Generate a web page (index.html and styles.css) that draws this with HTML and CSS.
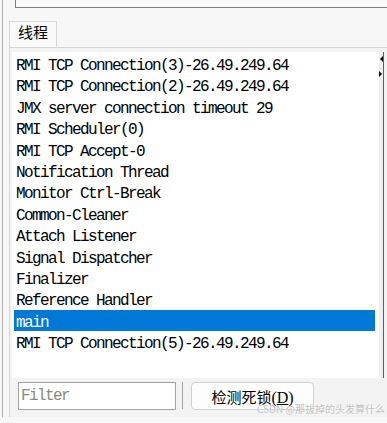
FILE: index.html
```html
<!DOCTYPE html>
<html>
<head>
<meta charset="utf-8">
<link rel="stylesheet" href="styles.css">
</head>
<body>
<div class="frame">
  <div class="topbox"></div>
  <div class="tabs"><div class="tab">线程</div></div>
  <div class="panel">
    <div class="listwrap">
      <ul class="list">
        <li>RMI TCP Connection(3)-26.49.249.64</li>
        <li>RMI TCP Connection(2)-26.49.249.64</li>
        <li>JMX server connection timeout 29</li>
        <li>RMI Scheduler(0)</li>
        <li>RMI TCP Accept-0</li>
        <li>Notification Thread</li>
        <li>Monitor Ctrl-Break</li>
        <li>Common-Cleaner</li>
        <li>Attach Listener</li>
        <li>Signal Dispatcher</li>
        <li>Finalizer</li>
        <li>Reference Handler</li>
        <li class="sel">main</li>
        <li>RMI TCP Connection(5)-26.49.249.64</li>
      </ul>
      <div class="strip"><span class="tri-l"></span><span class="tri-r"></span></div>
      <div class="divider"></div>
    </div>
    <div class="bottombar">
      <input class="filter" type="text" placeholder="Filter">
      <div class="sep"></div>
      <button class="btn">检测死锁<span class="mn">(<u>D</u>)</span></button>
    </div>
  </div>
  <div class="watermark">CSDN @那拔掉的头发算什么</div>
</div>
</body>
</html>
```

FILE: styles.css
```css
html, body {
  margin: 0;
  padding: 0;
  background: #f7f7f7;
  overflow: hidden;
}
.frame {
  position: relative;
  margin-left: 2px;
  height: 417px;
  border-left: 1px solid #b4b4b4;
}
.topbox {
  margin-left: 12px;
  height: 7px;
  border-left: 1px solid #7d7d7d;
  border-bottom: 1px solid #7d7d7d;
  background: #f9f9f9;
}
.tabs {
  margin-top: 13px;
  margin-left: 6px;
  display: flex;
}
.tab {
  width: 46px;
  height: 25px;
  border: 1px solid #d6d6d6;
  border-bottom: none;
  background: #f9f9f9;
  font-family: "Noto Sans CJK SC", sans-serif;
  font-size: 15px;
  line-height: 19px;
  text-align: center;
  color: #000;
}
.panel {
  margin-left: 6px;
  height: 366px;
  border-left: 1px solid #d6d6d6;
  border-top: 1px solid #d6d6d6;
  border-bottom: 1px solid #d6d6d6;
  background: #f3f3f3;
  padding: 4px 0 0 2px;
}
.listwrap {
  display: flex;
  height: 326px;
}
.list {
  margin: 0;
  list-style: none;
  width: 361px;
  padding: 1px 4px 0 2px;
  background: #fff;
  font-family: "Liberation Mono", monospace;
  font-size: 16px;
  letter-spacing: -1.6px;
  color: #000;
}
.list li {
  height: 21.4px;
  line-height: 26px;
  padding-left: 2px;
  white-space: nowrap;
}
.list li.sel {
  background: #0078d7;
  color: #fff;
}
.strip {
  width: 4px;
  background: #efefef;
  display: flex;
  flex-direction: column;
  align-items: flex-start;
}
.tri-l {
  margin-top: 4px;
  margin-left: 1px;
  width: 0;
  height: 0;
  border-right: 3px solid #000;
  border-top: 3px solid transparent;
  border-bottom: 3px solid transparent;
}
.tri-r {
  margin-top: 9px;
  width: 0;
  height: 0;
  border-left: 3px solid #000;
  border-top: 3px solid transparent;
  border-bottom: 3px solid transparent;
}
.divider {
  width: 1px;
  background: #5e5e5e;
}
.bottombar {
  display: flex;
  align-items: flex-start;
  padding: 4px 0 0 6px;
}
.filter {
  width: 158px;
  height: 28px;
  box-sizing: border-box;
  margin: 0;
  border: 1px solid #a3a3a3;
  background: #fff;
  padding: 0 0 0 2px;
  font-family: "Liberation Mono", monospace;
  font-size: 16px;
  letter-spacing: -1.6px;
  outline: none;
}
.filter::placeholder {
  color: #8a8a80;
}
.sep {
  margin-left: 6px;
  width: 1px;
  height: 27px;
  background: #a5a5a5;
}
.btn {
  margin: 0 0 0 8px;
  width: 123px;
  height: 28px;
  box-sizing: border-box;
  border: 1px solid #d0d0d0;
  border-radius: 4px;
  background: #fdfdfd;
  padding: 0;
  font-family: "Noto Sans CJK SC", sans-serif;
  font-size: 15px;
  color: #000;
}
.mn {
  font-family: "Liberation Serif", serif;
  font-size: 16px;
}
.watermark {
  position: absolute;
  left: 254px;
  top: 403px;
  font-family: "Noto Sans CJK SC", sans-serif;
  font-size: 10px;
  line-height: 12px;
  color: #c2c2c2;
  white-space: nowrap;
  text-shadow: 0 0 1px #fff;
}
```
